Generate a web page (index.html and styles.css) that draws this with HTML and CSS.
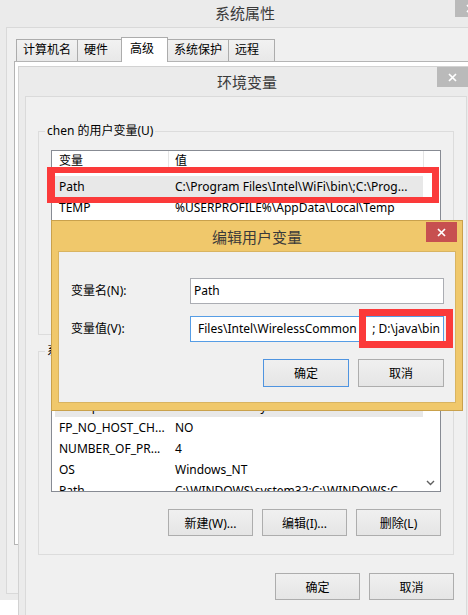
FILE: index.html
```html
<!DOCTYPE html>
<html lang="zh-CN">
<head>
  <meta charset="UTF-8" />
  <meta name="viewport" content="width=device-width, initial-scale=1.0"/>
  <title>环境变量</title>
  <link rel="stylesheet" href="styles.css">
</head>
<body>
  <div class="desk">

    <!-- 系统属性 -->
    <section class="win win-sys">
      <div class="title">系统属性
        <span class="close close-grey">
          <svg viewBox="0 0 9 9"><path d="M1 1L8 8M8 1L1 8"/></svg>
        </span>
      </div>
      <div class="client sys-client">
        <div class="tabs">
          <span class="tab">计算机名</span>
          <span class="tab">硬件</span>
          <span class="tab active">高级</span>
          <span class="tab">系统保护</span>
          <span class="tab">远程</span>
        </div>
        <div class="tab-panel"></div>
      </div>
    </section>

    <!-- 环境变量 -->
    <section class="win win-env">
      <div class="title">环境变量
        <span class="close close-grey">
          <svg viewBox="0 0 9 9"><path d="M1 1L8 8M8 1L1 8"/></svg>
        </span>
      </div>
      <div class="client env-client">
        <fieldset class="group">
          <legend>chen 的用户变量(U)</legend>
          <div class="list">
            <div class="list-body">
              <div class="list-head">
                <span class="col-name">变量</span>
                <span class="col-val">值</span>
                <span class="col-fill"></span>
              </div>
              <div class="row selected">
                <span class="col-name">Path</span>
                <span class="col-val">C:\Program Files\Intel\WiFi\bin\;C:\Prog...</span>
              </div>
              <div class="row">
                <span class="col-name">TEMP</span>
                <span class="col-val">%USERPROFILE%\AppData\Local\Temp</span>
              </div>
              <div class="row">
                <span class="col-name">TMP</span>
                <span class="col-val">%USERPROFILE%\AppData\Local\Temp</span>
              </div>
            </div>
          </div>
          <div class="btn-row">
            <button class="btn">新建(N)...</button>
            <button class="btn">编辑(E)...</button>
            <button class="btn">删除(D)</button>
          </div>
        </fieldset>

        <fieldset class="group group-sys">
          <legend>系统变量(S)</legend>
          <div class="list">
            <div class="list-body">
              <div class="list-head">
                <span class="col-name">变量</span>
                <span class="col-val">值</span>
              </div>
              <div class="row selected">
                <span class="col-name">ComSpec</span>
                <span class="col-val">C:\WINDOWS\system32\cmd.exe</span>
              </div>
              <div class="row">
                <span class="col-name">FP_NO_HOST_CH...</span>
                <span class="col-val">NO</span>
              </div>
              <div class="row">
                <span class="col-name">NUMBER_OF_PR...</span>
                <span class="col-val">4</span>
              </div>
              <div class="row">
                <span class="col-name">OS</span>
                <span class="col-val">Windows_NT</span>
              </div>
              <div class="row">
                <span class="col-name">Path</span>
                <span class="col-val">C:\WINDOWS\system32;C:\WINDOWS;C...</span>
              </div>
            </div>
            <div class="scroll">
              <div class="scroll-thumb"></div>
              <div class="scroll-down">
                <svg viewBox="0 0 9 6"><path d="M1 1L4.5 4.5L8 1"/></svg>
              </div>
            </div>
          </div>
          <div class="btn-row">
            <button class="btn">新建(W)...</button>
            <button class="btn">编辑(I)...</button>
            <button class="btn">删除(L)</button>
          </div>
        </fieldset>

        <div class="btn-row dialog-btns">
          <button class="btn">确定</button>
          <button class="btn">取消</button>
        </div>
      </div>
    </section>

    <!-- 编辑用户变量 -->
    <section class="win win-edit">
      <div class="title">编辑用户变量
        <span class="close close-red">
          <svg viewBox="0 0 9 9"><path d="M1 1L8 8M8 1L1 8"/></svg>
        </span>
      </div>
      <div class="client edit-client">
        <div class="form">
          <label class="form-label">变量名(N):</label>
          <div class="input">Path</div>
          <label class="form-label">变量值(V):</label>
          <div class="input input-focus">
            <span>Files\Intel\WirelessCommon</span>
            <span>; D:\java\bin</span>
          </div>
        </div>
        <div class="btn-row edit-btns">
          <button class="btn btn-default">确定</button>
          <button class="btn">取消</button>
        </div>
      </div>
    </section>

    <!-- red highlight boxes -->
    <div class="mark mark-path"></div>
    <div class="mark mark-value"></div>
  </div>
</body>
</html>
```

FILE: styles.css
```css
* {
  margin: 0;
  padding: 0;
  box-sizing: border-box;
}
body {
  width: 468px;
  height: 615px;
  overflow: hidden;
  background-color: #fff;
  font-family: "Noto Sans", "Noto Sans CJK SC", sans-serif;
  font-size: 12px;
  color: #000;
}
.desk {
  position: relative;
  width: 468px;
  height: 615px;
  overflow: hidden;
}

/* WINDOWS */
.win {
  position: absolute;
  display: flex;
  flex-direction: column;
}
.title {
  position: relative;
  flex: none;
  text-align: center;
  font-size: 15px;
  color: #3a3a3a;
}
.close {
  position: absolute;
  top: 0;
  display: flex;
  align-items: center;
  justify-content: center;
  width: 31px;
  height: 20px;
}
.close svg {
  width: 9px;
  height: 9px;
  stroke: #fff;
  stroke-width: 1.7;
  fill: none;
}
.close-grey {
  background-color: #bababa;
}
.close-red {
  background-color: #c75050;
}
.client {
  flex: 1;
  background-color: #f0f0f0;
  border: 1px solid #d9d9d9;
}

/* 系统属性 */
.win-sys {
  left: 0;
  top: 0;
  width: 490px;
  height: 600px;
  background-color: #ebebeb;
}
.win-sys .title {
  height: 27px;
  line-height: 26px;
}
.win-sys .close {
  right: 4px;
  height: 17px;
}
.sys-client {
  flex: none;
  height: 567px;
  margin: 0 8px 0 6px;
  padding: 9px 0 0 7px;
}
.tabs {
  display: flex;
  align-items: flex-end;
  height: 24px;
  margin-left: 2px;
  position: relative;
  z-index: 1;
}
.tab {
  min-width: 47px;
  height: 22px;
  line-height: 20px;
  padding: 0 6px;
  margin-right: -1px;
  border: 1px solid #acacac;
  border-bottom: none;
  background: linear-gradient(#f2f2f2, #e8e8e8);
}
.tab.active {
  height: 25px;
  line-height: 22px;
  padding: 0 8px;
  margin: 0 -1px -1px -2px;
  background: #fff;
  position: relative;
}
.tab-panel {
  height: 484px;
  background-color: #fff;
  border: 1px solid #b4b4b4;
}

/* 环境变量 */
.win-env {
  left: 18px;
  top: 66px;
  width: 458px;
  height: 560px;
  background-color: #ebebeb;
  border: 1px solid #d2d2d2;
}
.win-env .title {
  height: 29px;
  line-height: 31px;
}
.win-env .close {
  right: 7px;
}
.env-client {
  margin: 0 8px 0 6px;
  border-color: #dadada;
  padding: 26px 12px 0 12px;
}
.group {
  border: 1px solid #dcdcdc;
  padding: 0 12px 18px 12px;
  min-width: 0;
}
.group legend {
  margin-left: -6px;
  padding: 0 2px;
  line-height: 16px;
}
.group-sys {
  margin-top: 8px;
}

/* LIST VIEW */
.list {
  display: flex;
  height: 122px;
  margin-top: 11px;
  border: 1px solid #878b93;
  background-color: #fff;
  overflow: hidden;
}
.list-body {
  flex: 1;
  min-width: 0;
}
.list-head {
  display: flex;
  height: 21px;
  line-height: 20px;
  margin-bottom: 4px;
}
.list-head .col-name {
  width: 117px;
  padding-left: 7px;
  border-right: 1px solid #e5e5e5;
}
.list-head .col-val {
  width: 255px;
  padding-left: 6px;
  border-right: 1px solid #e5e5e5;
}
.list-head .col-fill {
  flex: 1;
}
.row {
  display: flex;
  width: 368px;
  height: 21px;
  line-height: 21px;
  margin-left: 3px;
  white-space: nowrap;
}
.row.selected {
  background-color: #e8e8e8;
}
.row .col-name {
  width: 114px;
  padding-left: 4px;
  overflow: hidden;
}
.row .col-val {
  width: 254px;
  padding-left: 6px;
  overflow: hidden;
}
.scroll {
  display: flex;
  flex-direction: column;
  width: 19px;
  padding-top: 17px;
}
.scroll-thumb {
  height: 23px;
  margin: 0 2px 0 4px;
  background-color: #cdcdcd;
}
.scroll-down {
  margin-top: auto;
  height: 17px;
  display: flex;
  align-items: center;
  justify-content: center;
}
.scroll-down svg {
  width: 9px;
  height: 6px;
  stroke: #606060;
  stroke-width: 1.4;
  fill: none;
}

/* BUTTONS */
.btn-row {
  display: flex;
  justify-content: flex-end;
  gap: 9px;
  margin-top: 17px;
}
.btn {
  width: 85px;
  height: 27px;
  border: 1px solid #adadad;
  background: linear-gradient(#f0f0f0, #e5e5e5);
  font-family: inherit;
  font-size: 12px;
  color: #000;
}
.btn-default {
  border-color: #4f94e0;
}
.dialog-btns {
  margin-top: 18px;
}

/* 编辑用户变量 */
.win-edit {
  left: 51px;
  top: 220px;
  width: 412px;
  height: 191px;
  background-color: #f0c86b;
  border: 1px solid #c9a14c;
}
.win-edit .title {
  height: 30px;
  line-height: 32px;
}
.win-edit .close {
  right: 5px;
  top: 1px;
}
.edit-client {
  margin: 0 6px 7px 6px;
  border-color: #d9b461;
  padding: 26px 11px 0 12px;
}
.form {
  display: grid;
  grid-template-columns: 119px 254px;
  row-gap: 12px;
  align-items: center;
}
.form-label {
  line-height: 26px;
}
.input {
  height: 26px;
  line-height: 24px;
  padding: 0 3px;
  border: 1px solid #abadb3;
  background-color: #fff;
  white-space: nowrap;
  overflow: hidden;
}
.input-focus {
  display: flex;
  justify-content: space-between;
  padding: 0 3px 0 7px;
  border-color: #569de5;
}
.edit-btns {
  gap: 9px;
}
.edit-btns .btn {
  width: 86px;
  height: 28px;
}

/* RED HIGHLIGHTS */
.mark {
  position: absolute;
  border: 7px solid #fb3a3a;
}
.mark-path {
  left: 47px;
  top: 167px;
  width: 392px;
  height: 36px;
  border-width: 6px 7px 6px 8px;
}
.mark-value {
  left: 359px;
  top: 309px;
  width: 94px;
  height: 39px;
}
```
